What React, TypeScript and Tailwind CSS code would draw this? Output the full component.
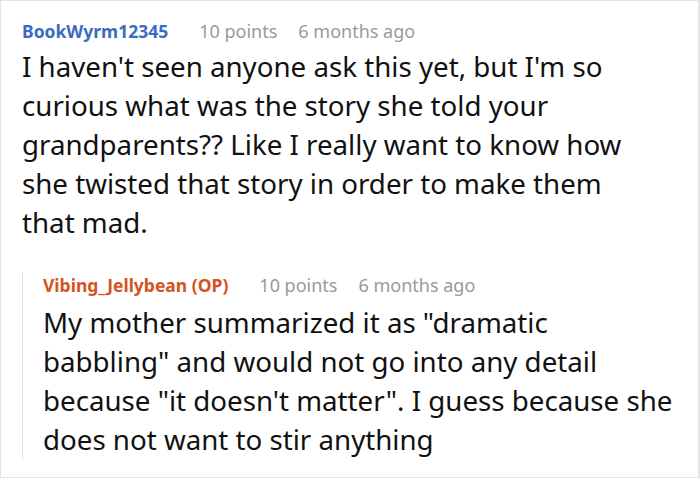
import React from "react";

type Comment = {
	author: string;
	op?: boolean;
	points: string;
	time: string;
	lines: string[];
};

const parent: Comment = {
	author: "BookWyrm12345",
	points: "10 points",
	time: "6 months ago",
	lines: [
		"I haven't seen anyone ask this yet, but I'm so",
		"curious what was the story she told your",
		"grandparents?? Like I really want to know how",
		"she twisted that story in order to make them",
		"that mad.",
	],
};

const reply: Comment = {
	author: "Vibing_Jellybean (OP)",
	op: true,
	points: "10 points",
	time: "6 months ago",
	lines: [
		'My mother summarized it as "dramatic',
		'babbling" and would not go into any detail',
		'because "it doesn\'t matter". I guess because she',
		"does not want to stir anything",
	],
};

function CommentHeader({ c }: { c: Comment }) {
	return (
		<div className="flex items-baseline leading-[24px]">
			<span
				className={
					c.op
						? "text-[17.5px] font-bold text-[#d4531f]"
						: "text-[17.5px] font-bold text-[#3a6cbf]"
				}
			>
				{c.author}
			</span>
			<span className="ml-[31px] text-[18px] text-[#9a9a9a]">{c.points}</span>
			<span className="ml-[21px] text-[18px] text-[#9a9a9a]">{c.time}</span>
		</div>
	);
}

function CommentBody({ lines }: { lines: string[] }) {
	return (
		<p className="text-[27.7px] leading-[39px] text-[#111] whitespace-nowrap">
			{lines.map((line, i) => (
				<React.Fragment key={i}>
					{line}
					{i < lines.length - 1 && <br />}
				</React.Fragment>
			))}
		</p>
	);
}

export default function App() {
	return (
		<div
			className="w-[700px] h-[478px] bg-white border border-[#e4e4e4] border-r-2 pl-[21px] pr-[18px] pt-[18px]"
			style={{ fontFamily: '"Noto Sans", sans-serif' }}
		>
			{/* Parent comment */}
			<CommentHeader c={parent} />
			<div className="mt-[4px]">
				<CommentBody lines={parent.lines} />
			</div>

			{/* Reply */}
			<div className="mt-[47px] border-l border-[#dedede] pl-[20px]">
				<div className="-mt-[16px]">
					<CommentHeader c={reply} />
				</div>
				<div className="mt-[6px]">
					<CommentBody lines={reply.lines} />
				</div>
			</div>
		</div>
	);
}
